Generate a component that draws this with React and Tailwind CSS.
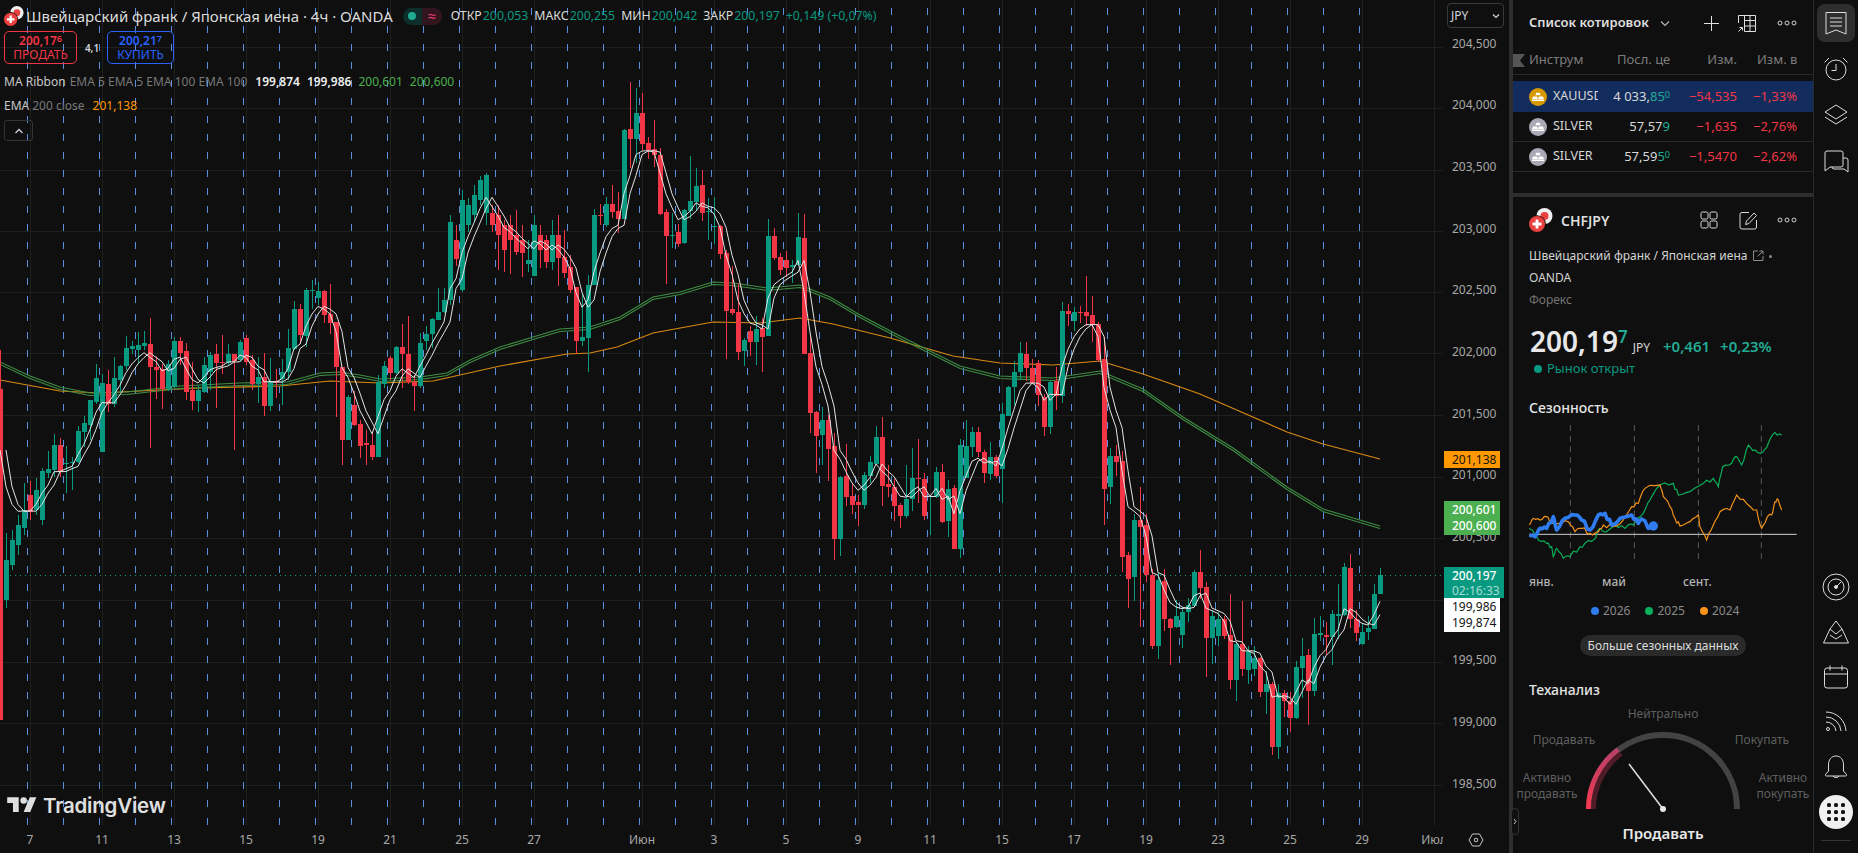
import React from 'react';

// top, bottom, wick top, wick bottom in page pixels, one per 4h bar (6px apart)
const CANDLES = `r389,720,350,720 g560,600,533,608 g540,565,530,570 g525,545,515,555 g510,528,483,535 r495,512,481,520 g490,510,478,515 g471,520,468,525
g469,473,451,478 g445,470,434,477 r445,471,438,477 g463,464,446,493 g462,463,457,490 g431,462,426,463 g423,432,416,447 g400,425,400,440 g378,402,364,404 g383,452,374,452
r384,404,370,412 g378,404,357,407 g366,380,365,392 g348,366,336,370 g346,349,341,354 g345,350,332,364 g343,346,331,350 r344,367,318,448 r367,370,356,399 r369,389,364,409
g364,389,360,391 g341,387,337,388 r341,353,337,365 r351,392,343,400 r390,401,362,410 g390,401,385,412 g365,392,357,393 g355,372,352,390 r354,363,344,408 r362,363,335,374
g354,363,344,365 r354,361,354,450 g342,360,340,362 r338,362,335,365 r360,384,355,390 g377,384,357,403 r377,406,353,416 g381,406,358,411 r381,383,369,398 g372,379,359,405
g348,372,329,380 g309,349,301,350 r309,335,304,344 g290,336,288,347 g290,291,280,309 g291,298,282,305 r291,315,290,323 r314,323,284,334 r322,367,322,417 r367,440,367,465
g397,440,395,440 r405,425,391,426 r424,446,420,458 r443,445,430,465 r445,457,432,460 g382,457,375,457 g366,384,361,388 r358,373,356,380 g347,373,346,374 r347,354,324,388
r354,382,316,384 r382,386,375,411 g343,386,333,388 g334,341,326,350 g319,334,318,348 g312,320,288,320 g300,312,288,313 g222,300,215,305 r240,259,225,266 g200,290,190,292
g205,225,198,232 g195,215,185,222 g180,200,176,205 g175,213,173,225 r213,225,205,232 r215,235,205,270 r225,250,220,272 r225,240,215,274 r235,252,210,255 r240,253,225,277
g260,264,240,272 g225,276,215,276 r235,250,225,268 r240,262,235,268 g235,262,220,270 r235,258,215,286 r257,273,230,278 r267,290,255,293 r287,341,287,354 g337,341,293,346
g285,338,275,372 g215,285,209,285 r215,216,204,225 g204,225,197,227 r204,212,185,218 r211,219,192,233 g130,219,129,219 r129,139,82,168 g113,139,88,163 r113,144,93,150
r143,150,137,159 r149,155,120,167 r155,214,148,215 r212,236,209,284 g235,236,213,248 r232,244,224,247 g210,243,209,244 g201,211,156,219 g186,202,168,211 r185,213,170,221
g211,212,198,240 g226,227,197,244 r226,254,225,259 r253,311,250,359 r309,313,266,315 r312,352,283,360 g340,351,338,366 r331,342,326,356 g329,342,316,365 r328,337,318,372
g236,336,219,336 r236,258,228,260 r257,270,253,275 r260,268,251,277 g265,267,260,283 g237,265,213,266 r238,354,214,354 r353,413,333,433 r412,436,411,473 g420,435,407,465
r420,449,415,481 r446,539,433,560 g477,539,476,556 r476,497,444,506 r496,505,483,514 r502,505,495,526 g475,505,472,509 g462,476,456,483 g437,464,426,465 r437,486,417,506
r484,487,465,497 r487,506,479,521 r505,516,503,528 g499,516,465,518 g478,499,448,511 r478,479,439,503 r479,516,473,520 g496,497,495,535 g472,497,467,498 r472,522,464,523
g489,521,480,537 r488,549,485,549 g445,549,439,558 g446,478,420,478 g432,447,427,457 r432,452,427,457 r452,473,450,483 g457,474,442,480 r457,476,455,478 g414,469,403,503
g387,416,386,416 g372,387,361,405 g353,372,342,380 r354,368,342,381 r368,383,359,384 r363,395,360,406 r397,427,394,436 g382,427,380,434 r381,396,367,410 g311,396,302,403
r311,314,304,326 g312,321,307,331 r312,313,306,323 r312,316,276,326 r315,325,296,342 r324,360,322,362 r359,489,337,525 g456,487,448,504 r456,462,445,476 r461,557,451,572
r555,579,552,608 g520,577,514,601 r520,527,487,627 r525,575,514,582 r575,646,569,649 g580,646,573,659 r581,619,569,631 r619,628,618,665 g616,627,600,628 g612,635,607,648
g605,612,598,622 g572,606,570,607 r572,588,550,599 r587,638,582,677 g616,638,610,664 g619,636,612,646 r619,636,616,639 r635,680,594,689 g644,680,642,701 r644,669,601,676
g651,670,646,684 g658,669,646,676 r658,692,657,697 g684,692,671,714 r684,747,682,755 g693,747,684,759 r693,701,690,717 r701,718,692,732 g667,718,661,719 g656,668,638,698
r655,691,649,725 g634,691,618,696 g633,635,616,641 r635,637,622,655 g614,637,610,665 g614,616,584,639 g567,615,563,616 r568,619,554,628 r619,633,610,641 g632,644,623,645
g628,632,616,640 g594,629,584,629 g575,594,568,594`
  .trim()
  .split(/\s+/)
  .map((token) => {
    const [top, bottom, high, low] = token.slice(1).split(',').map(Number);
    return { up: token[0] === 'g', top, bottom, high, low };
  });

const EMA_GREEN = '0,362 30,376 60,387 90,393 127,392 180,386 240,383 287,382 320,373 340,372 360,375 380,379 420,377 447,373 470,360 500,347 533,337 560,329 590,327 620,317 653,297 680,292 713,282 733,283 767,288 800,285 830,297 860,315 900,336 960,366 1000,376 1053,378 1100,371 1143,389 1183,417 1233,448 1287,487 1323,509 1380,526';
const EMA_ORANGE = '0,380 60,391 100,393 200,388 280,386 330,381 380,383 433,381 500,366 567,354 590,353 617,347 653,333 713,322 760,323 800,318 833,324 890,338 953,356 1000,363 1053,365 1100,361 1143,374 1200,394 1287,432 1323,444 1380,459';

const DAY_LINES = Array.from({ length: 38 }, (_, i) => 27.5 + 36 * i);
const GRID_X = [30, 102, 174, 246, 318, 390, 462, 534, 642, 714, 786, 858, 930, 1002, 1074, 1146, 1218, 1290, 1362, 1434];
const GRID_Y = [47, 108, 170, 231, 292, 353, 415, 477, 538, 600, 662, 723, 785];
const PRICES = ['204,500', '204,000', '203,500', '203,000', '202,500', '202,000', '201,500', '201,000', '200,500', '200,000', '199,500', '199,000', '198,500'];

function ribbonPoints() {
  // EMA 5 of the closes, seeded where the line enters the frame
  let value = 450;
  const points = [`0,${value}`];
  CANDLES.slice(1).forEach((c, i) => {
    value += ((c.up ? c.top : c.bottom) - value) / 3;
    points.push(`${6 * (i + 1)},${value.toFixed(1)}`);
  });
  return points;
}

function Chart() {
  const ribbon = ribbonPoints();
  const shifted = ribbon.slice(0, -1).map((p, i) => `${6 * (i + 1)},${p.split(',')[1]}`);
  return (
    <svg className="block" width="1443" height="826" viewBox="0 0 1443 826">
      {GRID_Y.map((y) => (
        <rect key={y} x="0" y={y} width="1443" height="1" fill="#1f1f1f" />
      ))}
      {GRID_X.map((x) => (
        <rect key={x} x={x} y="0" width="1" height="826" fill="#1f1f1f" />
      ))}
      {DAY_LINES.map((x) => (
        <line key={x} x1={x} x2={x} y1="-10" y2="826" stroke="#5b8edb" strokeWidth="1" strokeDasharray="7 11" />
      ))}
      <line x1="0" x2="1443" y1="575.5" y2="575.5" stroke="#089981" strokeWidth="1" strokeDasharray="1 4" />
      <polyline points={EMA_ORANGE} fill="none" stroke="#d98a12" strokeWidth="1.1" />
      <polyline points={EMA_GREEN} fill="none" stroke="#3f8f44" strokeWidth="1.1" />
      <polyline points={EMA_GREEN} transform="translate(0 2.5)" fill="none" stroke="#3f8f44" strokeWidth="1.1" />
      <g shapeRendering="crispEdges">
        {CANDLES.map((c, i) => (
          <g key={i} fill={c.up ? '#089981' : '#f23645'}>
            <rect x={6 * i} y={c.high} width="1" height={c.low - c.high} />
            <rect x={6 * i - 2} y={c.top} width="5" height={c.bottom - c.top} />
          </g>
        ))}
      </g>
      <polyline points={ribbon.join(' ')} fill="none" stroke="#e4e4e4" strokeWidth="1" />
      <polyline points={shifted.join(' ')} fill="none" stroke="#e4e4e4" strokeWidth="1" />
    </svg>
  );
}

function FlagPair({ size }) {
  return (
    <svg width={size} height={size} viewBox="0 0 24 24">
      <circle cx="15.5" cy="8" r="8" fill="#f0f0f0" />
      <circle cx="15.5" cy="8" r="4" fill="#e8413f" />
      <circle cx="8" cy="16" r="8.8" fill="#0f0f0f" />
      <circle cx="8" cy="16" r="8" fill="#e8413f" />
      <path d="M6.6 11.5h2.8v3.1h3.1v2.8H9.400v3.100H6.600v-3.100H3.500v-2.800h3.100z" fill="#fff" />
    </svg>
  );
}

function Legend() {
  return (
    <div className="absolute left-0 top-0 text-[12px] leading-none pointer-events-none">
      <div className="flex items-center h-[32px] pl-[4px]">
        <FlagPair size={20} />
        <span className="ml-[2px] text-[15px] text-[#dcdcdc] whitespace-nowrap">Швейцарский франк / Японская иена · 4ч · OANDA</span>
        <span className="ml-[10px] flex h-[17px] w-[39px] rounded-full overflow-hidden">
          <span className="flex-1 bg-[#0d2f2b] flex items-center justify-center">
            <span className="w-[8px] h-[8px] rounded-full bg-[#22ab94]" />
          </span>
          <span className="flex-1 bg-[#33151f] flex items-center justify-center text-[#f7437c] text-[14px]">≈</span>
        </span>
        <div className="ml-[9px] flex items-center whitespace-nowrap text-[#dcdcdc] text-[12.3px]">
          ОТКР<span className="ml-[1px] text-[#089981]">200,053</span>
          <span className="ml-[6px]">МАКС</span><span className="ml-[1px] text-[#089981]">200,255</span>
          <span className="ml-[6px]">МИН</span><span className="ml-[1px] text-[#089981]">200,042</span>
          <span className="ml-[6px]">ЗАКР</span><span className="ml-[1px] text-[#089981]">200,197</span>
          <span className="ml-[6px] text-[#089981]">+0,149 (+0,07%)</span>
        </div>
      </div>
      <div className="flex items-center h-[33px] pl-[4px] mt-[-1px]">
        <div className="w-[73px] h-[33px] rounded-[5px] border border-[#f23645] text-[#f23645] flex flex-col items-center justify-center gap-[2px]">
          <span className="font-semibold">200,17<span className="text-[9px] align-[3px]">6</span></span>
          <span>ПРОДАТЬ</span>
        </div>
        <span className="w-[30px] text-center text-[10px] text-[#d1d4dc] font-semibold">4,1</span>
        <div className="w-[67px] h-[33px] rounded-[5px] border border-[#2962ff] text-[#2962ff] flex flex-col items-center justify-center gap-[2px]">
          <span className="font-semibold">200,21<span className="text-[9px] align-[3px]">7</span></span>
          <span>КУПИТЬ</span>
        </div>
      </div>
      <div className="flex items-center h-[24px] pl-[4px] mt-[6px] whitespace-nowrap">
        <span className="text-[#c8c8c8]">MA Ribbon</span>
        <span className="ml-[4px] text-[#787878]">EMA 5 EMA 5 EMA 100 EMA 100</span>
        <span className="ml-[8px] font-semibold text-[#f0f0f0]">199,874</span>
        <span className="ml-[7px] font-semibold text-[#f0f0f0]">199,986</span>
        <span className="ml-[7px] text-[#4caf50]">200,601</span>
        <span className="ml-[7px] text-[#4caf50]">200,600</span>
      </div>
      <div className="flex items-center h-[24px] pl-[4px] whitespace-nowrap">
        <span className="text-[#c8c8c8]">EMA</span>
        <span className="ml-[3px] text-[#787878]">200 close</span>
        <span className="ml-[8px] text-[#ff9800]">201,138</span>
      </div>
      <div className="ml-[4px] mt-[2px] w-[29px] h-[21px] rounded-[3px] border border-[#333] flex items-center justify-center">
        <svg width="12" height="8" viewBox="0 0 12 8" fill="none" stroke="#d1d4dc" strokeWidth="1.3"><path d="M2.500 6 6 2.500 9.500 6" /></svg>
      </div>
    </div>
  );
}

function TradingViewMark() {
  return (
    <div className="absolute left-[7px] top-[794px] flex items-center gap-[6px] text-[#e0e0e0]">
      <svg width="30" height="23" viewBox="0 0 36 28" fill="currentColor">
        <path d="M14 22H7V11H0V4h14v18zM28 22h-8l7.500-18h8L28 22z" />
        <circle cx="20" cy="8" r="4" />
      </svg>
      <span className="font-['Inter',sans-serif] text-[20.5px] leading-[23px] font-semibold tracking-[-0.2px]">TradingView</span>
    </div>
  );
}

function PriceAxis() {
  return (
    <div className="relative w-[66px] pt-[13px] text-[12px] text-[#a8a8a8]">
      {PRICES.map((p) => (
        <div key={p} className="h-[61.65px] flex items-center pl-[9px]">{p}</div>
      ))}
      <div className="absolute left-[4px] top-[3px] w-[57px] h-[25px] rounded-[4px] border border-[#3a3a3a] flex items-center justify-between px-[3px] text-[#d1d4dc]">
        JPY
        <svg width="8" height="6" viewBox="0 0 8 6" fill="none" stroke="#d1d4dc" strokeWidth="1.2"><path d="M1 1.500 4 4.500 7 1.500" /></svg>
      </div>
      <div className="absolute left-[1px] top-[451px] w-[56px] h-[17px] bg-[#ff9800] text-[#131313] pl-[8px] flex items-center">201,138</div>
      <div className="absolute left-[1px] top-[501px] w-[56px] h-[34px] bg-[#4caf50] text-white font-medium pl-[8px] flex flex-col justify-center leading-[16px]">
        <span>200,601</span>
        <span>200,600</span>
      </div>
      <div className="absolute left-[1px] top-[567px] w-[60px] h-[31px] bg-[#089981] text-white pl-[8px] flex flex-col justify-center leading-[15px]">
        <span className="font-medium">200,197</span>
        <span className="text-[#a8dcd3]">02:16:33</span>
      </div>
      <div className="absolute left-[1px] top-[598px] w-[56px] h-[34px] bg-white text-[#131313] pl-[8px] flex flex-col justify-center leading-[16px]">
        <span>199,986</span>
        <span>199,874</span>
      </div>
    </div>
  );
}

function TimeAxis() {
  const before = ['7', '11', '13', '15', '19', '21', '25', '27'];
  const after = ['Июн', '3', '5', '9', '11', '15', '17', '19', '23', '25', '29', 'Июл'];
  return (
    <div className="flex h-[27px] w-[1509px] text-[12px] text-[#a8a8a8] overflow-hidden">
      <div className="flex w-[1449px] -ml-[6px] shrink-0 items-center overflow-hidden">
        {before.map((t, i) => (
          <span key={i} className="w-[72px] shrink-0 text-center">{t}</span>
        ))}
        <span className="w-[36px] shrink-0" />
        {after.map((t, i) => (
          <span key={i} className="w-[72px] shrink-0 text-center">{t}</span>
        ))}
      </div>
      <div className="flex flex-1 items-center justify-center">
        <svg width="16" height="14" viewBox="0 0 16 14" fill="none" stroke="#c8c8c8" strokeWidth="1">
          <path d="M4.500 1h7L15 7l-3.500 6h-7L1 7z" />
          <circle cx="8" cy="7" r="1.800" />
        </svg>
      </div>
    </div>
  );
}

function MetalIcon({ color }) {
  return (
    <svg width="18" height="18" viewBox="0 0 18 18" className="shrink-0">
      <circle cx="9" cy="9" r="9" fill={color} />
      <path d="M7.300 4.800h3.400l.9 2.500H6.400zM4 8.600h4.200l.6 2.300H3.200zM9.800 8.600H14l.8 2.300H9.200zM3 11.500h12v1.500H3z" fill="#fff" />
    </svg>
  );
}

function Price({ main, tail, sup }) {
  return (
    <span className="text-[#d8d8d8] whitespace-nowrap">
      {main}
      <span className="text-[#22ab94]">{tail}</span>
      {sup && <span className="text-[#22ab94] text-[9px] align-[3px]">{sup}</span>}
    </span>
  );
}

function WatchRow({ selected, color, name, price, change, percent }) {
  return (
    <div className={`flex items-center h-[30px] pl-[16px] pr-[16px] text-[13px] ${selected ? 'bg-[#132c5e] h-[31px]' : 'border-b border-[#2a2a2a]'}`}>
      <MetalIcon color={color} />
      <span className="ml-[6px] w-[45px] overflow-hidden whitespace-nowrap text-[#d8d8d8] text-[12.5px]">{name}</span>
      <span className="w-[72px] text-right">{price}</span>
      <span className="w-[67px] text-right text-[#f23645] whitespace-nowrap">{change}</span>
      <span className="w-[60px] text-right text-[#f23645] whitespace-nowrap">{percent}</span>
    </div>
  );
}

function Watchlist() {
  return (
    <div className="h-[193px] shrink-0">
      <div className="flex items-center h-[46px] pl-[16px]">
        <span className="text-[13px] font-semibold text-[#dedede] w-[122px] whitespace-nowrap">Список котировок</span>
        <svg className="ml-[9px]" width="10" height="7" viewBox="0 0 10 7" fill="none" stroke="#b8b8b8" strokeWidth="1.100"><path d="M1 1.500 5 5.500 9 1.500" /></svg>
        <svg className="ml-[33px]" width="17" height="17" viewBox="0 0 17 17" stroke="#e0e0e0" strokeWidth="1"><path d="M8.500 1v15M1 8.500h15" /></svg>
        <svg className="ml-[17px]" width="20" height="19" viewBox="0 0 20 19" fill="none" stroke="#e0e0e0" strokeWidth="1">
          <path d="M1.500 9V1.500h17v16H7.500M7.500 1.500v16M13 1.500v16M7.500 6.500h11M7.500 12h11" />
          <path d="M1.500 17.500 5 14M2.500 13.500H5.500v3" />
        </svg>
        <svg className="ml-[20px]" width="20" height="6" viewBox="0 0 20 6" fill="none" stroke="#d0d0d0" strokeWidth="1">
          <circle cx="3" cy="3" r="2" /><circle cx="10" cy="3" r="2" /><circle cx="17" cy="3" r="2" />
        </svg>
      </div>
      <div className="relative flex items-center h-[29px] border-b border-[#2a2a2a] pl-[16px] text-[13px] text-[#7c7c7c]">
        <svg className="absolute left-0 top-[8px]" width="12" height="13" viewBox="0 0 12 13" fill="#555"><path d="M0 0h12L7 6.500 12 13H0z" /></svg>
        <span className="w-[69px] overflow-hidden whitespace-nowrap">Инструм</span>
        <span className="w-[72px] text-right"><span className="inline-block w-[53px] overflow-hidden whitespace-nowrap align-top text-left">Посл. цена</span></span>
        <span className="w-[67px] text-right">Изм.</span>
        <span className="w-[60px] text-right"><span className="inline-block w-[40px] overflow-hidden whitespace-nowrap align-top text-left">Изм. в %</span></span>
      </div>
      <div className="h-[6px]" />
      <WatchRow selected color="#d69a00" name="XAUUSD" price={<Price main="4 033," tail="85" sup="0" />} change="−54,535" percent="−1,33%" />
      <WatchRow color="#a9a9b6" name="SILVER" price={<Price main="57,57" tail="9" />} change="−1,635" percent="−2,76%" />
      <WatchRow color="#a9a9b6" name="SILVER" price={<Price main="57,59" tail="5" sup="0" />} change="−1,5470" percent="−2,62%" />
    </div>
  );
}

const GREEN_2025 = [[88,385],[100,395],[115,420],[140,430],[155,440],[160,470],[170,445],[190,475],[210,470],[240,440],[260,425],[280,420],[300,385],[320,395],[345,375],[375,385],[400,375],[430,340],[450,300],[480,255],[520,250],[535,285],[570,275],[610,250],[640,235],[655,260],[668,200],[695,190],[710,170],[725,195],[745,135],[765,150],[790,155],[805,130],[825,98],[845,105]];
const ORANGE_2024 = [[88,375],[100,355],[120,360],[140,350],[155,370],[175,370],[205,365],[225,395],[245,385],[270,400],[295,395],[310,375],[340,380],[370,360],[395,320],[415,310],[435,265],[480,255],[490,290],[510,320],[525,355],[540,378],[570,365],[595,345],[600,380],[620,420],[640,375],[660,335],[690,330],[710,285],[740,310],[770,330],[785,385],[800,355],[815,345],[825,305],[835,300],[845,330]];
const BLUE_2026 = [[88,405],[105,410],[120,385],[140,385],[160,350],[170,390],[195,355],[225,345],[245,360],[270,390],[295,345],[315,340],[335,375],[360,355],[395,345],[415,370],[430,360],[445,385],[460,378]];

// adds small wiggle between the hand-read points so the lines look like price data
function jagged(points) {
  const out = [];
  points.forEach(([x, y], i) => {
    out.push(`${x},${y}`);
    const next = points[i + 1];
    if (!next) return;
    [1 / 3, 2 / 3].forEach((t, j) => {
      const noise = Math.sin((i + 1) * (j + 3) * 12.9898) * 43758.5;
      const wiggle = (noise - Math.floor(noise) - 0.5) * 14;
      out.push(`${x + (next[0] - x) * t},${y + (next[1] - y) * t + wiggle}`);
    });
  });
  return out.join(' ');
}

function Seasonality() {
  return (
    <div>
      <div className="pl-[16px] h-[22px] mt-[19px] text-[14px] font-medium text-[#e4e4e4] flex items-center">Сезонность</div>
      <svg className="block ml-[13px] mt-[2px]" width="290" height="150" viewBox="78 60 870 450">
        {[211, 403, 595, 784].map((x) => (
          <line key={x} x1={x} x2={x} y1="75" y2="485" stroke="#5a5a5a" strokeWidth="3" strokeDasharray="18 14" />
        ))}
        <line x1="88" x2="890" y1="403" y2="403" stroke="#cfcfcf" strokeWidth="3" />
        <polyline points={jagged(GREEN_2025)} fill="none" stroke="#0ab05a" strokeWidth="3.500" />
        <polyline points={jagged(ORANGE_2024)} fill="none" stroke="#f7931a" strokeWidth="3.500" />
        <polyline points={jagged(BLUE_2026)} fill="none" stroke="#2f7bf0" strokeWidth="11" strokeLinejoin="round" />
        <circle cx="460" cy="378" r="14" fill="#2f7bf0" />
      </svg>
      <div className="flex h-[24px] items-center pl-[16px] text-[12px] font-medium text-[#b2b2b2]">
        <span className="w-[73px]">янв.</span>
        <span className="w-[81px]">май</span>
        <span>сент.</span>
      </div>
      <div className="flex h-[18px] mt-[8px] items-center pl-[78px] text-[12px] text-[#8a8a8a] gap-[15px]">
        <span className="flex items-center gap-[4px]"><span className="w-[8px] h-[8px] rounded-full bg-[#2f7bf0]" />2026</span>
        <span className="flex items-center gap-[4px]"><span className="w-[8px] h-[8px] rounded-full bg-[#0ab05a]" />2025</span>
        <span className="flex items-center gap-[4px]"><span className="w-[8px] h-[8px] rounded-full bg-[#f7931a]" />2024</span>
      </div>
      <div className="ml-[67px] mt-[15px] w-[166px] h-[21px] rounded-full bg-[#2a2a2a] flex items-center justify-center text-[12px] text-[#dcdcdc] whitespace-nowrap">Больше сезонных данных</div>
    </div>
  );
}

function Gauge() {
  return (
    <div className="relative h-[176px] mt-[22px]">
      <div className="pl-[16px] h-[22px] text-[14px] font-medium text-[#e4e4e4] flex items-center">Теханализ</div>
      <svg className="absolute left-0 top-[23px]" width="300" height="153" viewBox="0 0 300 153" fill="none">
        <defs>
          <linearGradient id="sell" x1="0" x2="0" y1="108" y2="49" gradientUnits="userSpaceOnUse">
            <stop offset="0" stopColor="#f7374f" />
            <stop offset="1" stopColor="#b84068" />
          </linearGradient>
        </defs>
        <path d="M76 108A74 74 0 0 1 224 108" stroke="#434343" strokeWidth="6" />
        <path d="M75.500 108A74.500 74.500 0 0 1 105.200 48.500" stroke="url(#sell)" strokeWidth="5" />
        <path d="M80.500 108A69.500 69.500 0 0 1 108.200 52.500" stroke="#4f1c28" strokeWidth="5" />
        <line x1="150" y1="108" x2="116" y2="63" stroke="#e0e0e0" strokeWidth="1.500" />
        <circle cx="150" cy="108" r="3" fill="#e8e8e8" />
      </svg>
      <span className="absolute left-0 w-[300px] top-[27px] text-center text-[12px] text-[#5f5f5f]">Нейтрально</span>
      <span className="absolute left-[1px] w-[100px] top-[53px] text-center text-[12px] text-[#5f5f5f]">Продавать</span>
      <span className="absolute left-[199px] w-[100px] top-[53px] text-center text-[12px] text-[#5f5f5f]">Покупать</span>
      <span className="absolute left-0 w-[68px] top-[92px] text-center text-[12px] leading-[16px] text-[#5f5f5f]">Активно продавать</span>
      <span className="absolute left-[236px] w-[68px] top-[92px] text-center text-[12px] leading-[16px] text-[#5f5f5f]">Активно покупать</span>
      <span className="absolute left-0 w-[300px] top-[145px] text-center text-[15px] leading-[20px] font-semibold text-[#e8e8e8]">Продавать</span>
    </div>
  );
}

function Details() {
  return (
    <div className="flex-1 overflow-hidden">
      <div className="flex items-center h-[48px] pl-[16px] pb-[2px]">
        <FlagPair size={24} />
        <span className="ml-[8px] w-[139px] text-[14px] font-semibold text-[#dedede]">CHFJPY</span>
        <svg width="18" height="18" viewBox="0 0 18 18" fill="none" stroke="#d8d8d8" strokeWidth="1">
          <rect x="1" y="1" width="7" height="7" rx="1.500" /><rect x="10" y="1" width="7" height="7" rx="1.500" />
          <rect x="1" y="10" width="7" height="7" rx="1.500" /><rect x="10" y="10" width="7" height="7" rx="1.500" />
        </svg>
        <svg className="ml-[21px]" width="19" height="19" viewBox="0 0 19 19" fill="none" stroke="#d8d8d8" strokeWidth="1">
          <path d="M10 1.500H3a2 2 0 0 0-2 2V16a2 2 0 0 0 2 2h12.500a2 2 0 0 0 2-2V9" />
          <path d="M6.500 13.500l1-3.500 7.500-8 2.500 2.500-7.500 8z" />
        </svg>
        <svg className="ml-[19px]" width="20" height="6" viewBox="0 0 20 6" fill="none" stroke="#d0d0d0" strokeWidth="1">
          <circle cx="3" cy="3" r="2" /><circle cx="10" cy="3" r="2" /><circle cx="17" cy="3" r="2" />
        </svg>
      </div>
      <div className="pl-[16px] text-[12px] text-[#d4d4d4] leading-[22px]">
        <div className="flex items-center h-[22px] whitespace-nowrap">
          Швейцарский франк / Японская иена
          <svg className="ml-[5px]" width="12" height="12" viewBox="0 0 12 12" fill="none" stroke="#8a8a8a" strokeWidth="1"><path d="M6 1H1.500v9.500H11V6M7.500 1H11v3.500M11 1 5.500 6.500" /></svg>
          <span className="ml-[5px] w-[3px] h-[3px] rounded-full bg-[#8a8a8a]" />
        </div>
        <div className="h-[22px]">OANDA</div>
        <div className="h-[21px] text-[#757575]">Форекс</div>
      </div>
      <div className="flex items-baseline h-[40px] mt-[11px] pl-[17px] whitespace-nowrap">
        <span className="text-[28px] leading-[40px] font-semibold text-[#e8e8e8]">200,19</span>
        <span className="text-[17px] font-semibold text-[#22ab94] relative top-[-9px]">7</span>
        <span className="ml-[5px] text-[12px] text-[#d8d8d8]">JPY</span>
        <span className="ml-[13px] text-[15px] font-semibold text-[#22ab94]">+0,461</span>
        <span className="ml-[10px] text-[15px] font-semibold text-[#22ab94]">+0,23%</span>
      </div>
      <div className="flex items-center h-[16px] pl-[21px] text-[13px] text-[#089981]">
        <span className="w-[8px] h-[8px] rounded-full bg-[#089981] mr-[5px]" />
        Рынок открыт
      </div>
      <Seasonality />
      <Gauge />
    </div>
  );
}

function ToolIcon({ children, active }) {
  return (
    <div className="h-[46px] flex items-center justify-center">
      <div className={`w-[38px] h-[38px] rounded-[8px] flex items-center justify-center ${active ? 'bg-[#2e2e2e]' : ''}`}>
        <svg width="28" height="28" viewBox="0 0 28 28" fill="none" stroke="#dcdcdc" strokeWidth="1">{children}</svg>
      </div>
    </div>
  );
}

function Toolbar() {
  return (
    <div className="w-[45px] shrink-0 border-l border-[#2a2a2a] flex flex-col">
      <ToolIcon active>
        <path d="M4 3.500h20v21.500l-10-4-10 4z" /><path d="M8 9h12M8 13h12M8 17h12" />
      </ToolIcon>
      <ToolIcon>
        <circle cx="14" cy="15" r="10" /><path d="M14 9v6.500H9.500M2.500 7.500 7 3M25.500 7.500 21 3" />
      </ToolIcon>
      <ToolIcon>
        <path d="M14 4 25 11 14 18 3 11zM3 16l11 7 11-7" />
      </ToolIcon>
      <ToolIcon>
        <path d="M5 4h14a2 2 0 0 1 2 2v12a2 2 0 0 1-2 2H8l-5 4V6a2 2 0 0 1 2-2z" />
        <path d="M21 11h3a2 2 0 0 1 2 2v12l-4-3H12a2 2 0 0 1-2-2" />
      </ToolIcon>
      <div className="mt-auto">
        <div className="[&>div]:h-[45px]">
          <ToolIcon>
            <circle cx="14" cy="14" r="13" /><circle cx="14" cy="14" r="8" /><circle cx="14" cy="14" r="1.500" fill="#dcdcdc" /><path d="M14 14 19 9" />
          </ToolIcon>
          <ToolIcon>
            <path d="M14 3 20 11 14 16 8 11zM8 11 1.500 25h25L20 11M8 17l6 4 6-4" />
          </ToolIcon>
          <ToolIcon>
            <rect x="2.500" y="5" width="23" height="20" rx="2.500" /><path d="M2.500 11h23M8 2.500v5M20 2.500v5" />
          </ToolIcon>
          <ToolIcon>
            <circle cx="6" cy="21" r="1.500" /><path d="M4 14a10 10 0 0 1 10 9M4 9a15 15 0 0 1 15 14M4 4a20 20 0 0 1 20 19" />
          </ToolIcon>
          <ToolIcon>
            <path d="M14 3c5 0 7.500 4 7.500 9v6l3 3.500a1 1 0 0 1-1 1.500h-19a1 1 0 0 1-1-1.500l3-3.500v-6c0-5 2.500-9 7.500-9z" /><path d="M11 23c.5 2 5.500 2 6 0" />
          </ToolIcon>
          <div className="flex items-center justify-center">
            <div className="w-[34px] h-[34px] rounded-full bg-[#f0f0f0] grid grid-cols-3 gap-[3px] p-[8px]">
              {Array.from({ length: 9 }, (_, i) => (
                <span key={i} className="rounded-[1.500px] bg-[#131313]" />
              ))}
            </div>
          </div>
        </div>
        <div className="mx-[7px] mt-[6px] mb-[12px] h-[1px] bg-[#333]" />
      </div>
    </div>
  );
}

export default function App() {
  return (
    <div className="flex w-[1858px] h-[853px] overflow-hidden bg-[#0f0f0f] font-['Noto_Sans',sans-serif]">
      <div className="w-[1509px] shrink-0 flex flex-col">
        <div className="flex h-[826px]">
          <div className="relative w-[1443px] overflow-hidden">
            <Chart />
            <Legend />
            <TradingViewMark />
          </div>
          <PriceAxis />
        </div>
        <TimeAxis />
      </div>
      <div className="relative w-[304px] shrink-0 border-l-[4px] border-[#2e2e2e] flex flex-col">
        <Watchlist />
        <div className="h-[4px] shrink-0 bg-[#2e2e2e]" />
        <Details />
        <div className="absolute left-[-2px] top-[808px] w-[8px] h-[27px] rounded-[4px] border border-[#333] bg-[#0f0f0f] flex items-center justify-center">
          <svg width="4" height="7" viewBox="0 0 4 7" fill="none" stroke="#c8c8c8" strokeWidth="1"><path d="M1 1l2 2.500L1 6" /></svg>
        </div>
      </div>
      <Toolbar />
    </div>
  );
}
